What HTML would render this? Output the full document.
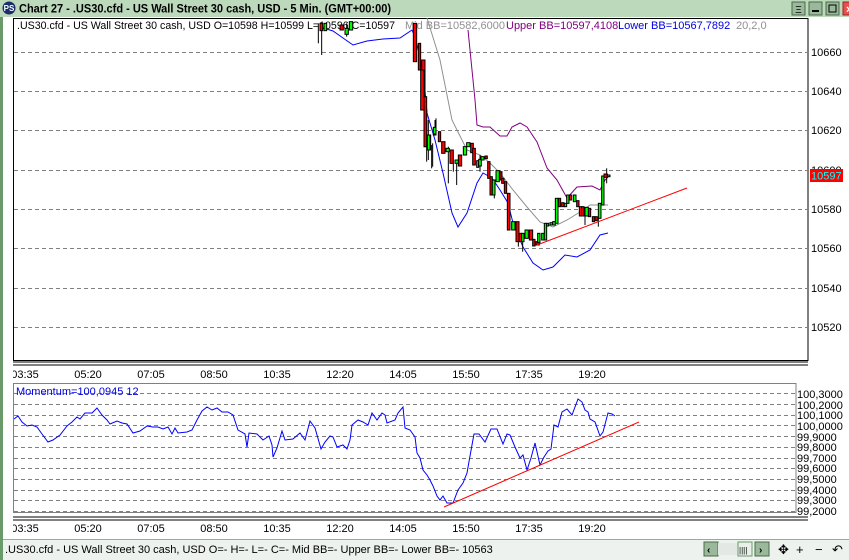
<!DOCTYPE html>
<html><head><meta charset="utf-8"><style>
html,body{margin:0;padding:0;width:849px;height:560px;overflow:hidden;background:#fff;font-family:"Liberation Sans",sans-serif}
</style></head><body>
<svg width="849" height="560" xmlns="http://www.w3.org/2000/svg" font-family="Liberation Sans, sans-serif">
<rect x="0" y="0" width="849" height="560" fill="#fff"/>
<!-- title bar -->
<rect x="0" y="0" width="849" height="17" fill="#bcd9bc"/>
<circle cx="9" cy="8" r="6.5" fill="#1a2f6a"/>
<text x="9" y="11" font-size="8" fill="#fff" text-anchor="middle" font-weight="bold">PS</text>
<text x="19" y="12.5" font-size="12" font-weight="bold" fill="#000" textLength="372" lengthAdjust="spacingAndGlyphs">Chart 27 - .US30.cfd - US Wall Street 30 cash, USD - 5 Min. (GMT+00:00)</text>
<rect x="792" y="2" width="13" height="13" fill="#9ab89a" stroke="#4a6a4a"/><text x="798.5" y="13" font-size="10" text-anchor="middle">Ξ</text>
<rect x="809" y="2" width="13" height="13" fill="#9ab89a" stroke="#4a6a4a"/><rect x="812" y="10" width="7" height="2" fill="#000"/>
<rect x="826" y="2" width="13" height="13" fill="#9ab89a" stroke="#4a6a4a"/><rect x="829" y="5" width="7" height="7" fill="none" stroke="#000"/>
<rect x="843" y="2" width="13" height="13" fill="#e85050" stroke="#a02020"/><text x="846" y="13" font-size="11" fill="#fff" font-weight="bold">×</text>
<!-- left border -->
<rect x="0" y="17" width="3" height="543" fill="#6a9a6a"/>
<!-- main plot -->
<defs><clipPath id="cm"><rect x="13" y="18" width="795" height="342"/></clipPath>
<clipPath id="cl"><rect x="13" y="383" width="783" height="130"/></clipPath>
<clipPath id="ct"><rect x="13" y="360" width="800" height="180"/></clipPath></defs>
<rect x="13.5" y="18.5" width="794.5" height="342" fill="#fff" stroke="#000"/>
<g stroke="#808080" stroke-dasharray="4,3" stroke-width="1">
<line x1="14" y1="52.5" x2="808" y2="52.5"/><line x1="14" y1="91.5" x2="808" y2="91.5"/>
<line x1="14" y1="130.5" x2="808" y2="130.5"/><line x1="14" y1="170.5" x2="808" y2="170.5"/>
<line x1="14" y1="209.5" x2="808" y2="209.5"/><line x1="14" y1="248.5" x2="808" y2="248.5"/>
<line x1="14" y1="288.5" x2="808" y2="288.5"/><line x1="14" y1="327.5" x2="808" y2="327.5"/>
</g>
<g font-size="11" fill="#000">
<text x="811" y="56">10660</text><text x="811" y="95">10640</text><text x="811" y="134">10620</text>
<text x="811" y="174">10600</text><text x="811" y="213">10580</text><text x="811" y="252">10560</text>
<text x="811" y="292">10540</text><text x="811" y="331">10520</text>
</g>
<rect x="810" y="169" width="33" height="13" fill="#f00"/>
<text x="811" y="179.5" font-size="11" fill="#0ff">10597</text>
<g font-size="11">
<text x="17" y="29" fill="#000" textLength="378" lengthAdjust="spacingAndGlyphs">.US30.cfd - US Wall Street 30 cash, USD O=10598 H=10599 L=10596 C=10597</text>
<text x="405" y="29" fill="#909090">Mid BB=10582,6000</text>
<text x="506" y="29" fill="#800080">Upper BB=10597,4108</text>
<text x="618" y="29" fill="#0000e0">Lower BB=10567,7892</text>
<text x="736" y="29" fill="#909090">20,2,0</text>
</g>
<g clip-path="url(#cm)">
<!-- bands -->
<polyline fill="none" stroke="#0000ff" points="320,27 333,31 343,38 353,45 367,41 383,39 400,38 412,30 415,37 420,57 424,80 427,113 435,140 443,173 452,213 458,227 467,213 477,183 483,173 492,178 500,190 508,203 513,223 523,247 533,263 543,270 553,267 565,255 577,257 590,250 600,235 608,233"/>
<polyline fill="none" stroke="#909090" points="427,18 440,60 452,120 467,150 480,155 490,163 500,173 513,190 527,207 540,222 553,227 567,220 580,212 590,205 608,205"/>
<polyline fill="none" stroke="#800080" points="468,30 473,80 475,100 477,125 483,127 490,127 500,136 507,136 512,127 520,123 527,127 537,142 547,168 557,180 567,198 577,187 592,186 600,190 605,180 610,175"/>
<g transform="translate(400,80) scale(0.33333)" stroke="#000" stroke-width="3">
<line x1="80" y1="120" x2="80" y2="245"/><line x1="95" y1="195" x2="95" y2="265"/><line x1="105" y1="120" x2="105" y2="150"/>
<line x1="145" y1="200" x2="145" y2="310"/><line x1="160" y1="240" x2="160" y2="275"/><line x1="170" y1="250" x2="170" y2="315"/>
<line x1="240" y1="225" x2="240" y2="275"/><line x1="283" y1="335" x2="283" y2="355"/><line x1="355" y1="480" x2="355" y2="500"/>
<line x1="368" y1="480" x2="368" y2="515"/><line x1="555" y1="400" x2="555" y2="435"/><line x1="595" y1="415" x2="595" y2="440"/>
<line x1="620" y1="265" x2="620" y2="310"/>
<g fill="#f00">
<rect x="65" y="-60" width="10" height="150"/><rect x="72" y="90" width="8" height="110"/><rect x="115" y="155" width="7" height="30"/>
<rect x="125" y="185" width="10" height="35"/><rect x="150" y="210" width="10" height="40"/><rect x="175" y="225" width="10" height="33"/>
<rect x="212" y="190" width="8" height="28"/><rect x="218" y="205" width="8" height="50"/><rect x="255" y="228" width="7" height="8"/>
<rect x="263" y="245" width="7" height="50"/><rect x="270" y="290" width="7" height="55"/><rect x="300" y="275" width="6" height="25"/>
<rect x="305" y="295" width="7" height="15"/><rect x="313" y="305" width="7" height="35"/><rect x="322" y="340" width="8" height="110"/>
<rect x="348" y="425" width="9" height="60"/><rect x="358" y="460" width="7" height="25"/><rect x="388" y="450" width="10" height="30"/>
<rect x="398" y="478" width="7" height="20"/><rect x="408" y="485" width="10" height="10"/><rect x="475" y="355" width="7" height="25"/>
<rect x="485" y="368" width="7" height="12"/><rect x="508" y="345" width="7" height="15"/><rect x="530" y="362" width="7" height="18"/>
<rect x="538" y="380" width="8" height="28"/><rect x="545" y="380" width="7" height="28"/><rect x="565" y="385" width="7" height="25"/>
<rect x="577" y="410" width="7" height="15"/><rect x="585" y="410" width="7" height="12"/><rect x="612" y="282" width="10" height="10"/>
</g>
<g fill="#0f0">
<rect x="85" y="165" width="7" height="45"/><rect x="100" y="145" width="8" height="20"/><rect x="138" y="205" width="10" height="10"/>
<rect x="165" y="240" width="10" height="10"/><rect x="190" y="200" width="10" height="25"/><rect x="200" y="188" width="10" height="12"/>
<rect x="230" y="242" width="6" height="20"/><rect x="236" y="238" width="8" height="20"/><rect x="243" y="230" width="9" height="10"/>
<rect x="277" y="300" width="8" height="45"/><rect x="288" y="272" width="10" height="33"/><rect x="335" y="425" width="10" height="25"/>
<rect x="365" y="460" width="7" height="25"/><rect x="375" y="450" width="10" height="25"/><rect x="413" y="460" width="7" height="28"/>
<rect x="425" y="460" width="7" height="20"/><rect x="433" y="430" width="7" height="50"/><rect x="440" y="430" width="6" height="8"/>
<rect x="450" y="428" width="8" height="7"/><rect x="458" y="425" width="8" height="10"/><rect x="466" y="355" width="8" height="75"/>
<rect x="493" y="370" width="7" height="10"/><rect x="500" y="345" width="7" height="25"/><rect x="520" y="345" width="8" height="20"/>
<rect x="555" y="382" width="10" height="26"/><rect x="595" y="370" width="8" height="45"/><rect x="605" y="288" width="7" height="87"/>
<rect x="622" y="285" width="8" height="5"/>
</g>
</g>
<g transform="translate(300,10) scale(0.33333)" stroke="#000" stroke-width="3">
<line x1="65" y1="40" x2="65" y2="135"/><line x1="55" y1="40" x2="55" y2="100"/><line x1="140" y1="40" x2="140" y2="80"/>
<line x1="385" y1="330" x2="385" y2="450"/><line x1="398" y1="400" x2="398" y2="470"/><line x1="408" y1="325" x2="408" y2="370"/>
<g fill="#f00"><rect x="60" y="40" width="8" height="22"/><rect x="120" y="45" width="10" height="15"/><rect x="340" y="40" width="10" height="115"/>
<rect x="355" y="100" width="7" height="80"/><rect x="362" y="180" width="10" height="120"/><rect x="372" y="260" width="8" height="150"/></g>
<g fill="#0f0"><rect x="72" y="40" width="8" height="22"/><rect x="135" y="55" width="10" height="18"/><rect x="148" y="35" width="10" height="25"/>
<rect x="382" y="375" width="8" height="45"/><rect x="400" y="352" width="8" height="20"/></g>
</g>
<line x1="537" y1="245" x2="687" y2="188" stroke="#f00"/>
</g>
<!-- separators -->
<line x1="13" y1="362" x2="808" y2="362" stroke="#000"/>
<line x1="13" y1="365" x2="808" y2="365" stroke="#000"/>
<g font-size="11" fill="#000" text-anchor="middle" clip-path="url(#ct)">
<text x="25" y="378">03:35</text><text x="88" y="378">05:20</text><text x="151" y="378">07:05</text><text x="214" y="378">08:50</text>
<text x="277" y="378">10:35</text><text x="340" y="378">12:20</text><text x="403" y="378">14:05</text><text x="466" y="378">15:50</text>
<text x="529" y="378">17:35</text><text x="592" y="378">19:20</text>
</g>
<!-- momentum panel -->
<rect x="13.5" y="383.5" width="782.5" height="129" fill="#fff" stroke="#808080"/>
<g stroke="#808080" stroke-dasharray="4,3">
<line x1="14" y1="393.5" x2="796" y2="393.5"/><line x1="14" y1="404.5" x2="796" y2="404.5"/><line x1="14" y1="415.5" x2="796" y2="415.5"/>
<line x1="14" y1="425.5" x2="796" y2="425.5"/><line x1="14" y1="436.5" x2="796" y2="436.5"/><line x1="14" y1="447.5" x2="796" y2="447.5"/>
<line x1="14" y1="458.5" x2="796" y2="458.5"/><line x1="14" y1="468.5" x2="796" y2="468.5"/><line x1="14" y1="479.5" x2="796" y2="479.5"/>
<line x1="14" y1="490.5" x2="796" y2="490.5"/><line x1="14" y1="500.5" x2="796" y2="500.5"/><line x1="14" y1="511.5" x2="796" y2="511.5"/>
</g>
<g font-size="11" fill="#000">
<text x="797" y="398">100,3000</text><text x="797" y="409">100,2000</text><text x="797" y="419">100,1000</text>
<text x="797" y="430">100,0000</text><text x="797" y="441">99,9000</text><text x="797" y="451">99,8000</text>
<text x="797" y="462">99,7000</text><text x="797" y="472">99,6000</text><text x="797" y="483">99,5000</text>
<text x="797" y="494">99,4000</text><text x="797" y="504">99,3000</text><text x="797" y="515">99,2000</text>
</g>
<text x="16" y="395" font-size="11" fill="#0000e0">Momentum=100,0945  12</text>
<g clip-path="url(#cl)">
<polyline fill="none" stroke="#0000ff" points="14,419 18,416 22,422 27,426 32,425 37,427 42,434 48,442 53,440 60,435 67,426 72,422 77,417 80,419 85,413 92,413 97,408 102,415 107,420 110,424 117,421 122,423 127,424 133,433 140,431 147,426 153,427 158,427 163,429 168,427 172,434 175,428 178,433 187,432 192,430 197,420 202,411 207,407 212,410 217,408 222,412 228,412 233,415 238,430 245,434 247,447 249,433 257,434 263,440 269,436 272,445 273,457 277,448 282,431 285,440 293,439 300,433 305,440 310,421 315,428 321,449 325,442 330,436 333,437 337,447 343,445 347,449 350,440 352,425 358,420 363,422 368,425 372,413 377,420 382,413 385,415 387,423 395,420 398,413 403,407 405,428 410,430 415,437 417,453 420,458 423,470 427,475 430,480 433,486 437,496 440,500 443,496 447,503 453,503 458,490 463,483 467,473 470,456 474,434 479,434 485,442 491,429 497,429 503,444 507,434 510,435 515,447 520,458 523,455 527,470 531,458 535,443 540,465 544,457 548,451 551,449 554,425 558,427 562,412 567,409 572,415 578,399 582,402 585,410 588,412 590,419 595,422 600,436 603,432 608,413 612,414 615,416"/>
<line x1="444" y1="507" x2="639" y2="422" stroke="#f00"/>
</g>
<!-- bottom time axis -->
<line x1="13" y1="517" x2="808" y2="517" stroke="#000"/>
<line x1="13" y1="520" x2="808" y2="520" stroke="#000"/>
<g font-size="11" fill="#000" text-anchor="middle" clip-path="url(#ct)">
<text x="25" y="532">03:35</text><text x="88" y="532">05:20</text><text x="151" y="532">07:05</text><text x="214" y="532">08:50</text>
<text x="277" y="532">10:35</text><text x="340" y="532">12:20</text><text x="403" y="532">14:05</text><text x="466" y="532">15:50</text>
<text x="529" y="532">17:35</text><text x="592" y="532">19:20</text>
</g>
<!-- status bar -->
<rect x="3" y="539" width="846" height="21" fill="#eef2ee"/>
<line x1="3" y1="539.5" x2="849" y2="539.5" stroke="#9aaa9a"/>
<text x="5" y="553" font-size="11" fill="#000">.US30.cfd - US Wall Street 30 cash, USD O=- H=- L=- C=-  Mid BB=- Upper BB=- Lower BB=-   10563</text>
<rect x="704" y="542" width="14" height="14" fill="#9ab89a" stroke="#4a6a4a"/><text x="707" y="553" font-size="10" font-weight="bold">‹</text>
<rect x="718" y="543" width="34" height="12" fill="#e4e8e4"/>
<rect x="738" y="542" width="14" height="14" fill="#e8f0e8" stroke="#6a9a6a"/><text x="739" y="553" font-size="8">||||</text>
<rect x="755" y="542" width="14" height="14" fill="#9ab89a" stroke="#4a6a4a"/><text x="759" y="553" font-size="10" font-weight="bold">›</text>
<text x="778" y="554" font-size="13">✥</text>
<text x="796" y="554" font-size="13">+</text>
<text x="815" y="554" font-size="13">−</text>
<text x="832" y="554" font-size="13">↶</text>
</svg>
</body></html>
